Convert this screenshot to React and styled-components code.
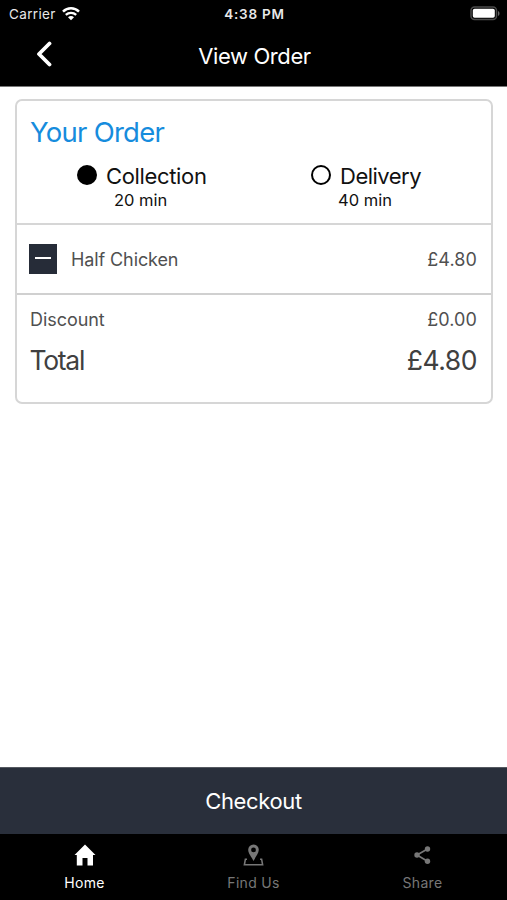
import React, { useState } from "react";
import styled, { createGlobalStyle } from "styled-components";

const GlobalStyle = createGlobalStyle`
  * {
    box-sizing: border-box;
  }
  body {
    margin: 0;
    background: #fff;
    font-family: Inter, "Liberation Sans", sans-serif;
  }
  button {
    border: 0;
    padding: 0;
    background: none;
    font: inherit;
    color: inherit;
  }
  svg {
    display: block;
  }
`;

const Screen = styled.div`
  display: flex;
  flex-direction: column;
  width: 507px;
  height: 900px;
  overflow: hidden;
  background: #fff;
`;

const StatusBar = styled.div`
  display: grid;
  grid-template-columns: 1fr auto 1fr;
  align-items: center;
  height: 27px;
  padding: 0 7px 0 9px;
  background: #000;
  color: #e8e8e8;
  font-size: 13.5px;
`;

const Carrier = styled.div`
  display: flex;
  align-items: center;
  gap: 6px;
  letter-spacing: 0.35px;
`;

const Clock = styled.div`
  font-weight: 600;
  letter-spacing: 0.8px;
`;

const Battery = styled.div`
  display: flex;
  justify-content: flex-end;
`;

const Header = styled.header`
  display: grid;
  grid-template-columns: 90px 1fr 88px;
  align-items: center;
  height: 60px;
  padding-bottom: 3px;
  background: #000;
  border-bottom: 1px solid #777;
  color: #fff;
`;

const BackButton = styled.button`
  display: flex;
  justify-content: center;
  padding-right: 2px;
  margin-top: -2px;
`;

const Title = styled.h1`
  margin: 1px 0 0;
  text-align: center;
  font-size: 22px;
  font-weight: 400;
  line-height: 28px;
  letter-spacing: -0.4px;
`;

const Main = styled.main`
  flex: 1;
  padding: 12px 14px 0 15px;
`;

const Card = styled.section`
  height: 305px;
  border: 2px solid #d6d6d6;
  border-radius: 7px;
`;

const Options = styled.div`
  height: 124px;
  padding-top: 15px;
  border-bottom: 2px solid #d6d6d6;
`;

const CardTitle = styled.h2`
  margin: 0 0 0 13px;
  color: #168cdd;
  font-size: 27.5px;
  font-weight: 400;
  line-height: 32px;
  letter-spacing: -0.75px;
`;

const Methods = styled.div`
  display: flex;
  padding-top: 13px;
`;

const Method = styled.div`
  width: ${props => props.width}px;
  padding-left: ${props => props.inset}px;
  color: #111;
`;

const MethodName = styled.div`
  display: flex;
  align-items: center;
  gap: 9px;
  height: 29px;
  font-size: 22px;
  line-height: 31px;
  letter-spacing: ${props => props.tracking}px;
`;

const Radio = styled.span`
  width: 20px;
  height: 20px;
  margin-bottom: 2px;
  border: 2px solid #000;
  border-radius: 50%;
  background: ${props => (props.checked ? "#000" : "#fff")};
`;

const MethodLabel = styled.span`
  padding-top: 1px;
`;

const Wait = styled.div`
  padding-left: ${props => props.inset}px;
  font-size: 16.5px;
  line-height: 20px;
`;

const ItemRow = styled.div`
  display: flex;
  align-items: center;
  height: 70px;
  padding: 0 14px 0 12px;
  border-bottom: 2px solid #d0d0d0;
  color: #505050;
  font-size: 18px;
`;

const RemoveButton = styled.button`
  display: flex;
  justify-content: center;
  width: 28px;
  height: 30px;
  padding-top: 13px;
  margin-right: 14px;
  background: #262c38;
`;

const Minus = styled.span`
  width: 16px;
  height: 2px;
  background: #fff;
`;

const ItemName = styled.span`
  flex: 1;
  letter-spacing: -0.1px;
`;

const Price = styled.span`
  letter-spacing: ${props => (props.large ? -0.45 : 0.1)}px;
`;

const Summary = styled.div`
  padding: 12px 14px 0 13px;
`;

const SummaryRow = styled.div`
  display: flex;
  justify-content: space-between;
  color: ${props => (props.large ? "#404040" : "#505050")};
  font-size: ${props => (props.large ? 26.5 : 18)}px;
  line-height: ${props => (props.large ? 32 : 26)}px;
  margin-bottom: 11px;
`;

const SummaryLabel = styled.span`
  margin-left: ${props => (props.large ? -0.5 : 0)}px;
  letter-spacing: ${props => (props.large ? -1.3 : -0.05)}px;
`;

const CheckoutButton = styled.button`
  height: 67px;
  padding-bottom: 1px;
  background: #292f3b;
  border-top: 1px solid #555960;
  color: #fff;
  font-size: 22px;
  letter-spacing: -0.35px;
`;

const TabBar = styled.nav`
  display: grid;
  grid-template-columns: repeat(3, 1fr);
  height: 66px;
  background: #000;
`;

const Tab = styled.button`
  display: flex;
  flex-direction: column;
  align-items: center;
  padding-top: 9px;
  color: ${props => (props.active ? "#fff" : "#777")};
  font-size: 14px;
  line-height: 18px;
  letter-spacing: 0.3px;
`;

const TabIcon = styled.span`
  height: 24px;
  margin-bottom: 7px;
`;

const WifiIcon = () => (
  <svg width="18" height="14" viewBox="0 0 18 14" fill="none" stroke="#fff">
    <path d="M1 4.700C5.600.2 12.400.2 17 4.700" strokeWidth="2.500" />
    <path d="M3.800 7.900c3-2.800 7.400-2.800 10.400 0" strokeWidth="2.300" />
    <path d="M9 13.200 6 10.300c1.800-1.600 4.200-1.600 6 0Z" fill="#fff" stroke="none" />
  </svg>
);

const BatteryIcon = () => (
  <svg width="30" height="15" viewBox="0 0 30 15">
    <rect x="1" y="1" width="25.5" height="12.5" rx="3.5" fill="#000" stroke="#4b4b4b" strokeWidth="1.5" />
    <rect x="2.8" y="2.8" width="22" height="9" rx="1.8" fill="#fff" />
    <path d="M28 5c2 .8 2 4.200 0 5Z" fill="#666" />
  </svg>
);

const BackIcon = () => (
  <svg width="16" height="26" viewBox="0 0 16 26" fill="none">
    <path
      d="M13.5 2.5 3 13l10.5 10.5"
      stroke="#fff"
      strokeWidth="3.8"
      strokeLinecap="round"
      strokeLinejoin="round"
    />
  </svg>
);

const HomeIcon = () => (
  <svg width="22" height="24" viewBox="0 0 22 24" fill="currentColor">
    <path d="M11 1.5.5 12h2.300v10.500H8.500V15h5v7.500H19V12h2.500Z" />
  </svg>
);

const PinIcon = () => (
  <svg width="22" height="24" viewBox="0 0 22 24">
    <path
      d="M10.500 1.500A5.300 5.300 0 0 0 5.200 6.800C5.200 10.600 8.700 14 10.500 18c1.800-4 5.300-7.400 5.300-11.200A5.300 5.300 0 0 0 10.500 1.500Zm0 3a2.400 2.400 0 1 1 0 4.800 2.400 2.400 0 0 1 0-4.800Z"
      fill="currentColor"
      fillRule="evenodd"
    />
    <path d="M4 16.200H2.400L1.400 21.700H19.600L18.600 16.200H17" fill="none" stroke="currentColor" strokeWidth="1.600" />
  </svg>
);

const ShareIcon = () => (
  <svg width="18" height="24" viewBox="0 0 18 24" fill="currentColor">
    <path d="M13.500 6 3 12l10.500 6.300" fill="none" stroke="currentColor" strokeWidth="1.700" />
    <circle cx="13.500" cy="6" r="2.700" />
    <circle cx="3" cy="12" r="2.700" />
    <circle cx="13.500" cy="18.300" r="2.700" />
  </svg>
);

const methods = [
  { name: "Collection", wait: "20 min", width: 234, inset: 60, waitInset: 37, tracking: -0.35 },
  { name: "Delivery", wait: "40 min", width: 239, inset: 60, waitInset: 27, tracking: -0.5 }
];

const tabs = [
  { name: "Home", icon: <HomeIcon /> },
  { name: "Find Us", icon: <PinIcon /> },
  { name: "Share", icon: <ShareIcon /> }
];

function App() {
  const [method, setMethod] = useState("Collection");

  return (
    <Screen>
      <GlobalStyle />
      <StatusBar>
        <Carrier>
          Carrier <WifiIcon />
        </Carrier>
        <Clock>4:38 PM</Clock>
        <Battery>
          <BatteryIcon />
        </Battery>
      </StatusBar>
      <Header>
        <BackButton aria-label="Back">
          <BackIcon />
        </BackButton>
        <Title>View Order</Title>
      </Header>
      <Main>
        <Card>
          <Options>
            <CardTitle>Your Order</CardTitle>
            <Methods>
              {methods.map(m => (
                <Method
                  key={m.name}
                  width={m.width}
                  inset={m.inset}
                  onClick={() => setMethod(m.name)}
                >
                  <MethodName tracking={m.tracking}>
                    <Radio checked={method === m.name} />
                    <MethodLabel>{m.name}</MethodLabel>
                  </MethodName>
                  <Wait inset={m.waitInset}>{m.wait}</Wait>
                </Method>
              ))}
            </Methods>
          </Options>
          <ItemRow>
            <RemoveButton aria-label="Remove">
              <Minus />
            </RemoveButton>
            <ItemName>Half Chicken</ItemName>
            <Price>£4.80</Price>
          </ItemRow>
          <Summary>
            <SummaryRow>
              <SummaryLabel>Discount</SummaryLabel>
              <Price>£0.00</Price>
            </SummaryRow>
            <SummaryRow large>
              <SummaryLabel large>Total</SummaryLabel>
              <Price large>£4.80</Price>
            </SummaryRow>
          </Summary>
        </Card>
      </Main>
      <CheckoutButton>Checkout</CheckoutButton>
      <TabBar>
        {tabs.map(tab => (
          <Tab key={tab.name} active={tab.name === "Home"}>
            <TabIcon>{tab.icon}</TabIcon>
            {tab.name}
          </Tab>
        ))}
      </TabBar>
    </Screen>
  );
}

export default App;
